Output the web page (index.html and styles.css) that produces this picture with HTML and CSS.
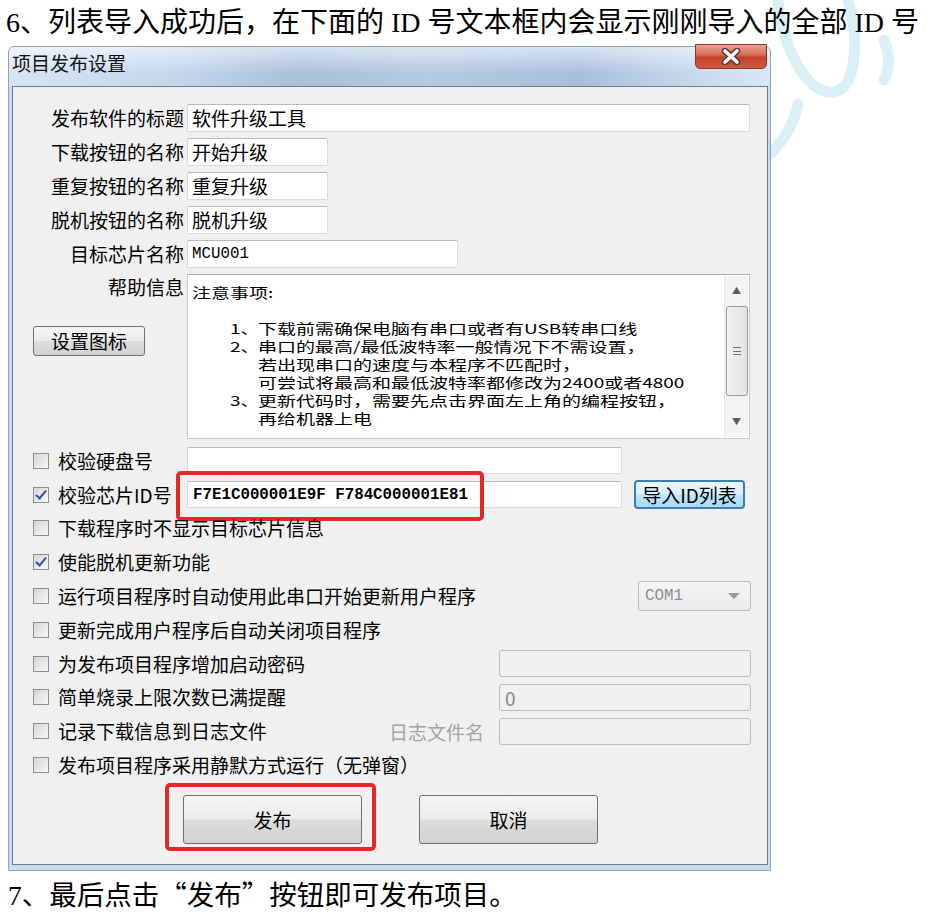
FILE: index.html
```html
<!DOCTYPE html>
<html lang="zh-CN">
<head>
    <meta charset="UTF-8">
    <meta name="viewport" content="width=device-width, initial-scale=1.0">
    <title>项目发布设置</title>
    <link rel="stylesheet" href="styles.css">
</head>
<body>
    <!-- faint logo watermark behind the dialog -->
    <svg class="watermark" width="927" height="913" viewBox="0 0 927 913">
        <path d="M778 0 C784 55 810 96 834 92 C856 88 860 42 848 0" />
        <path d="M798 104 C794 124 784 140 770 154" />
        <path d="M884 40 C890 54 890 68 884 80" />
    </svg>

    <p class="step">6、列表导入成功后，在下面的 ID 号文本框内会显示刚刚导入的全部 ID 号</p>

    <div class="window">
        <div class="titlebar">
            <span class="title">项目发布设置</span>
            <div class="close">
                <svg width="22" height="17" viewBox="0 0 22 17">
                    <path class="x-outline" d="M5 3 L17 14 M17 3 L5 14" />
                    <path class="x-fill" d="M5 3 L17 14 M17 3 L5 14" />
                </svg>
            </div>
        </div>

        <div class="client">
            <div class="fields">
                <span class="field-label">发布软件的标题</span>
                <div class="input w-full">软件升级工具</div>

                <span class="field-label">下载按钮的名称</span>
                <div class="input w-short">开始升级</div>

                <span class="field-label">重复按钮的名称</span>
                <div class="input w-short">重复升级</div>

                <span class="field-label">脱机按钮的名称</span>
                <div class="input w-short">脱机升级</div>

                <span class="field-label">目标芯片名称</span>
                <div class="input w-mid mono">MCU001</div>

                <div class="help-side">
                    <span class="field-label">帮助信息</span>
                    <button class="btn icon-btn">设置图标</button>
                </div>
                <div class="memo">
                    <div class="memo-view">
                        <div class="memo-text">
                            <div class="line">注意事项:</div>
                            <div class="line">&nbsp;</div>
                            <div class="line item"><span class="num">1、</span>下载前需确保电脑有串口或者有USB转串口线</div>
                            <div class="line item"><span class="num">2、</span>串口的最高/最低波特率一般情况下不需设置，</div>
                            <div class="line cont">若出现串口的速度与本程序不匹配时，</div>
                            <div class="line cont">可尝试将最高和最低波特率都修改为2400或者4800</div>
                            <div class="line item"><span class="num">3、</span>更新代码时，需要先点击界面左上角的编程按钮，</div>
                            <div class="line cont">再给机器上电</div>
                        </div>
                    </div>
                    <div class="scrollbar">
                        <span class="arrow">▲</span>
                        <div class="thumb"><span class="grip"></span></div>
                        <span class="arrow arrow-down">▼</span>
                    </div>
                </div>
            </div>

            <div class="options">
                <div class="opt">
                    <span class="check fixed"><i class="box"></i>校验硬盘号</span>
                    <div class="input w-id"></div>
                </div>
                <div class="opt">
                    <span class="check fixed"><i class="box checked"></i>校验芯片ID号</span>
                    <div class="input w-id mono id-text">F7E1C000001E9F F784C000001E81</div>
                    <button class="btn import-btn">导入ID列表</button>
                    <span class="mark mark-id"></span>
                </div>
                <div class="opt">
                    <span class="check"><i class="box"></i>下载程序时不显示目标芯片信息</span>
                </div>
                <div class="opt">
                    <span class="check"><i class="box checked"></i>使能脱机更新功能</span>
                </div>
                <div class="opt">
                    <span class="check grow"><i class="box"></i>运行项目程序时自动使用此串口开始更新用户程序</span>
                    <div class="combo"><span class="mono">COM1</span><span class="caret"></span></div>
                </div>
                <div class="opt">
                    <span class="check"><i class="box"></i>更新完成用户程序后自动关闭项目程序</span>
                </div>
                <div class="opt">
                    <span class="check grow"><i class="box"></i>为发布项目程序增加启动密码</span>
                    <div class="input disabled w-side"></div>
                </div>
                <div class="opt">
                    <span class="check grow"><i class="box"></i>简单烧录上限次数已满提醒</span>
                    <div class="input disabled w-side">0</div>
                </div>
                <div class="opt">
                    <span class="check grow"><i class="box"></i>记录下载信息到日志文件</span>
                    <span class="hint">日志文件名</span>
                    <div class="input disabled w-side"></div>
                </div>
                <div class="opt">
                    <span class="check"><i class="box"></i>发布项目程序采用静默方式运行（无弹窗）</span>
                </div>
            </div>

            <div class="actions">
                <div class="action-wrap">
                    <button class="btn big-btn">发布</button>
                    <span class="mark mark-publish"></span>
                </div>
                <button class="btn big-btn">取消</button>
            </div>
        </div>
    </div>

    <p class="step step-last">7、最后点击<span class="cjk-quote">“</span>发布<span class="cjk-quote">”</span>按钮即可发布项目。</p>
</body>
</html>
```

FILE: styles.css
```css
/* Page */
* {
    margin: 0;
    padding: 0;
    box-sizing: border-box;
}

body {
    position: relative;
    height: 913px;
    overflow: hidden;
    background: #ffffff;
    color: #000000;
    font-family: "Noto Sans CJK SC", sans-serif;
}

.watermark {
    position: absolute;
    top: 0;
    left: 0;
    z-index: 0;
    pointer-events: none;
}

.watermark path {
    fill: none;
    stroke: #dbeff6;
    stroke-width: 11;
    stroke-linecap: round;
}

/* Document text above and below the dialog */
.step {
    position: relative;
    padding: 6px 0 0 6px;
    font-family: "Liberation Serif", "Noto Sans CJK SC", serif;
    font-size: 28px;
    line-height: 34px;
    white-space: nowrap;
}

.step-last {
    padding: 4px 0 0 8px;
    font-size: 27.5px;
    line-height: 36px;
}

.cjk-quote {
    font-family: "Noto Sans CJK SC", sans-serif;
}

/* Dialog frame */
.window {
    position: relative;
    z-index: 1;
    width: 763px;
    margin: 6px 0 0 8px;
    padding: 0 2px 5px 3px;
    background: #c9dcf0;
    border: 1px solid #8ea3bb;
    border-radius: 6px 6px 0 0;
}

.titlebar {
    position: relative;
    height: 39px;
    margin: 0 -2px 0 -3px;
    padding: 3px 0 0 3px;
    background:
        linear-gradient(180deg, rgba(255, 255, 255, 0.55), rgba(255, 255, 255, 0) 70%),
        linear-gradient(90deg, #d6e5f4 0, #c3d6ec 22%, #a9bfda 38%, #b4c9e2 55%, #a8bedb 75%, #cbdcef 92%, #d9e7f5 100%);
    border-radius: 5px 5px 0 0;
}

.title {
    font-size: 19px;
    line-height: 26px;
    color: #111111;
}

.close {
    position: absolute;
    top: -3px;
    right: 3px;
    width: 72px;
    height: 25px;
    display: flex;
    align-items: center;
    justify-content: center;
    background: linear-gradient(180deg, #e9a393 0, #d9705a 40%, #c4402a 55%, #cf5a3e 100%);
    border: 1px solid #8b3526;
    border-radius: 0 0 5px 5px;
}

.x-outline {
    stroke: #5a3a36;
    stroke-width: 6.5;
    stroke-linecap: round;
}

.x-fill {
    stroke: #ffffff;
    stroke-width: 3.6;
    stroke-linecap: round;
}

.client {
    height: 779px;
    background: #f0f0f0;
    border: 1px solid #6d7b8b;
}

/* Labelled text fields */
.fields {
    display: grid;
    grid-template-columns: 171px 563px;
    grid-template-rows: repeat(5, 28px) 165px;
    column-gap: 3px;
    row-gap: 6px;
    padding-top: 17px;
    font-size: 19px;
}

.field-label {
    text-align: right;
    line-height: 28px;
    white-space: nowrap;
}

.input {
    height: 28px;
    padding-left: 4px;
    background: #ffffff;
    border: 1px solid #dadada;
    border-top-color: #b9b9b9;
    border-radius: 2px;
    font-size: 19px;
    line-height: 26px;
    white-space: nowrap;
}

.w-full { width: 563px; }
.w-short { width: 141px; }
.w-mid { width: 271px; }
.w-id { width: 435px; height: 27px; }
.w-side { width: 252px; height: 27px; }

.mono {
    font-family: "Liberation Mono", "DejaVu Sans Mono", monospace;
    font-size: 15.8px;
}

.id-text {
    font-weight: bold;
    padding-left: 5px;
}

.input.disabled {
    background: #f0f0f0;
    border: 1px solid #bdbdbd;
    border-radius: 3px;
    color: #8a8a8a;
    padding-left: 5px;
}

.help-side {
    display: flex;
    flex-direction: column;
    align-items: flex-end;
}

.help-side .field-label {
    line-height: 26px;
}

/* Buttons */
.btn {
    font-family: "Noto Sans CJK SC", sans-serif;
    font-size: 19px;
    color: #000000;
    background: linear-gradient(180deg, #f6f6f6 0, #ececec 48%, #dcdcdc 52%, #d2d2d2 100%);
    border: 1px solid #707070;
    border-radius: 3px;
    cursor: pointer;
}

.icon-btn {
    align-self: flex-start;
    width: 112px;
    height: 30px;
    margin: 26px 0 0 20px;
    line-height: 26px;
}

.import-btn {
    width: 111px;
    height: 29px;
    margin-left: 12px;
    line-height: 25px;
    background: linear-gradient(180deg, #eaf6fd 0, #d9f0fc 48%, #bee6fd 52%, #a7d9f5 100%);
    border: 2px solid #3c7fb1;
    border-radius: 4px;
}

.big-btn {
    width: 179px;
    height: 49px;
}

/* Help memo: the old dialog font is wide and short, so squash it */
.memo {
    display: flex;
    width: 563px;
    height: 165px;
    background: #ffffff;
    border: 1px solid #c9c9c9;
    border-top-color: #aaaaaa;
}

.memo-view {
    flex: 1;
    padding: 8px 0 0 4px;
    overflow: hidden;
}

.memo-text {
    font-size: 19px;
    line-height: 25px;
    white-space: nowrap;
    transform: scaleY(0.72);
    transform-origin: top left;
}

.memo-text .item {
    padding-left: 38px;
}

.memo-text .num {
    display: inline-block;
    width: 28px;
}

.memo-text .cont {
    padding-left: 66px;
}

.scrollbar {
    display: flex;
    flex-direction: column;
    align-items: center;
    width: 24px;
    margin: 1px 1px 1px 0;
    background: #f3f3f3;
    border-left: 1px solid #e6e6e6;
}

.arrow {
    height: 30px;
    font-size: 9px;
    line-height: 30px;
    color: #5a5a5a;
}

.arrow-down {
    margin-top: auto;
}

.thumb {
    display: flex;
    align-items: center;
    justify-content: center;
    width: 22px;
    height: 90px;
    background: linear-gradient(90deg, #f2f2f2, #e2e2e2);
    border: 1px solid #9a9a9a;
    border-radius: 3px;
}

.grip {
    width: 8px;
    height: 8px;
    border-top: 1px solid #6f6f6f;
    border-bottom: 1px solid #6f6f6f;
    background: linear-gradient(180deg, transparent 3px, #6f6f6f 3px, #6f6f6f 4px, transparent 4px);
}

/* Check box rows */
.options {
    margin-top: 5px;
}

.opt {
    position: relative;
    display: flex;
    align-items: center;
    height: 33.8px;
    padding: 0 16px 0 20px;
    font-size: 19px;
}

.check {
    display: flex;
    align-items: center;
    gap: 9px;
    line-height: 26px;
    white-space: nowrap;
}

.check.fixed {
    width: 154px;
    flex: none;
}

.check.grow {
    flex: 1;
}

.box {
    position: relative;
    width: 16px;
    height: 16px;
    flex: none;
    background: linear-gradient(135deg, #d6d6d6, #f7f7f7);
    border: 1px solid #8e8f8f;
}

.box.checked::after {
    content: "";
    position: absolute;
    left: 4px;
    top: 0;
    width: 4px;
    height: 9px;
    border: solid #2c55a8;
    border-width: 0 2px 2px 0;
    transform: rotate(40deg);
}

.combo {
    display: flex;
    align-items: center;
    justify-content: space-between;
    width: 113px;
    height: 30px;
    padding: 0 10px 0 6px;
    color: #8c8c8c;
    background: linear-gradient(180deg, #f5f5f5, #ebebeb);
    border: 1px solid #bcbcbc;
    border-radius: 3px;
}

.caret {
    width: 0;
    height: 0;
    border-left: 6px solid transparent;
    border-right: 6px solid transparent;
    border-top: 6px solid #9a9a9a;
}

.hint {
    margin-right: 15px;
    color: #a3a3a3;
}

/* Red highlight marks */
.mark {
    position: absolute;
    border: 4px solid #e8262a;
    border-radius: 5px;
    pointer-events: none;
}

.mark-id {
    left: 163px;
    top: -7px;
    width: 308px;
    height: 50px;
}

.actions {
    display: flex;
    gap: 57px;
    margin-top: 13px;
    padding-left: 170px;
}

.action-wrap {
    position: relative;
}

.mark-publish {
    left: -18px;
    top: -12px;
    width: 211px;
    height: 68px;
}
```
